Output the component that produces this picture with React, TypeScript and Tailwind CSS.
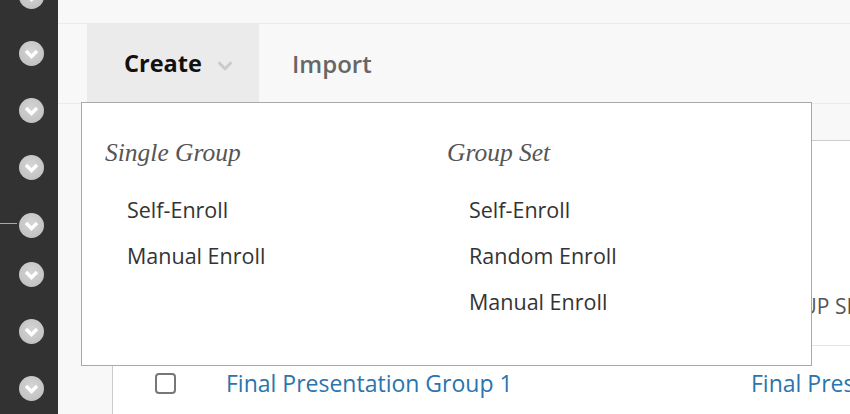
import { ChevronDown } from 'lucide-react'

const rail = [
  { mt: 'mt-[-16px]', line: false },
  { mt: 'mt-[32px]', line: false },
  { mt: 'mt-[32px]', line: false },
  { mt: 'mt-[32px]', line: false },
  { mt: 'mt-[33px]', line: true },
  { mt: 'mt-[24px]', line: false },
  { mt: 'mt-[32px]', line: false },
  { mt: 'mt-[32px]', line: false },
]

function RailButton({ line, mt }: { line: boolean; mt: string }) {
  return (
    <div className={`relative flex h-[25px] w-full shrink-0 items-center pl-[19px] ${mt}`}>
      {line && <span className="absolute top-[10px] left-0 h-px w-[17px] bg-[#a9a9a9]" />}
      <span className="flex h-[25px] w-[25px] items-center justify-center rounded-full bg-[radial-gradient(circle_at_50%_40%,#d4d4d4,#bcbcbc)]">
        <svg width="25" height="25" viewBox="0 0 25 25">
          <path d="M7 10 L12.5 15.5 L18 10" fill="none" stroke="#fff" strokeWidth="3.4" strokeLinejoin="miter" />
        </svg>
      </span>
    </div>
  )
}

const singleGroup = ['Self-Enroll', 'Manual Enroll']
const groupSet = ['Self-Enroll', 'Random Enroll', 'Manual Enroll']

function MenuColumn({ title, items, width }: { title: string; items: string[]; width: string }) {
  return (
    <div className={width}>
      <h3 className="h-[30px] font-['Liberation_Serif',serif] text-[25.5px] leading-[30px] text-[#555] italic">{title}</h3>
      <ul className="mt-[27px] flex flex-col gap-[16px] pl-[22px]">
        {items.map((it) => (
          <li key={it} className="text-[21.5px] leading-[30px] text-[#333]">
            {it}
          </li>
        ))}
      </ul>
    </div>
  )
}

export default function App() {
  return (
    <div className="flex h-[414px] w-[850px] overflow-hidden bg-[#f8f8f8] font-['Open_Sans',sans-serif]">
      <aside className="flex w-[58px] shrink-0 flex-col bg-[#323232]">
        {rail.map((r, i) => (
          <RailButton key={i} line={r.line} mt={r.mt} />
        ))}
      </aside>

      <main className="flex min-w-0 flex-1 flex-col">
        <div className="h-[24px] shrink-0 border-b border-[#ebebeb]" />

        <div className="relative flex h-[80px] shrink-0 border-b border-[#ebebeb] pl-[29px]">
          <div className="flex h-[79px] w-[172px] items-center gap-[12px] bg-[#ebebeb] pl-[37px]">
            <span className="text-[23.5px] font-bold text-[#111]">Create</span>
            <ChevronDown size={22} strokeWidth={3.4} className="mt-[4px] text-[#cbcbcb]" />
          </div>
          <div className="flex h-[79px] items-center pl-[33px]">
            <span className="text-[24px] font-semibold text-[#666]">Import</span>
          </div>

          <div className="absolute top-[78px] left-[23px] z-10 flex h-[264px] w-[731px] border border-[#a8a8a8] bg-white pt-[35px] pl-[23px]">
            <MenuColumn title="Single Group" items={singleGroup} width="w-[342px]" />
            <MenuColumn title="Group Set" items={groupSet} width="w-[300px]" />
          </div>
        </div>

        <div className="h-[36px] shrink-0" />

        <section className="ml-[54px] flex-1 border-t border-l border-[#cccccc] bg-white">
          <div className="grid h-[205px] grid-cols-[113px_525px_1fr] items-end border-b border-[#e4e4e4] pb-[24px] text-[21px] leading-[30px] text-[#555] uppercase">
            <span />
            <span>Group Name</span>
            <span className="pl-[6px] whitespace-nowrap">Group Set</span>
          </div>
          <div className="grid grid-cols-[113px_525px_1fr] items-center pt-[22px] text-[23px] leading-[30px] text-[#2b74ad]">
            <span className="pl-[42px]">
              <span className="block h-[21px] w-[21px] rounded-[4px] border-2 border-[#777]" />
            </span>
            <span className="whitespace-nowrap">Final Presentation Group 1</span>
            <span className="whitespace-nowrap">Final Presentation</span>
          </div>
        </section>
      </main>
    </div>
  )
}
